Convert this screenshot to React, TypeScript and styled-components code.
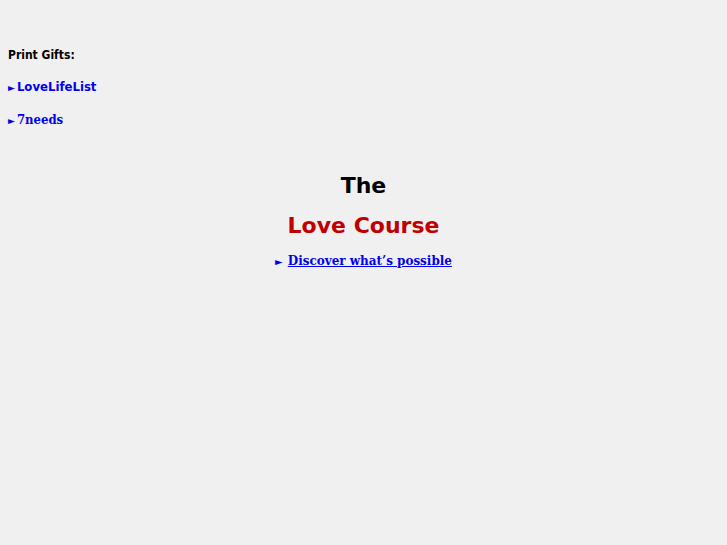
import { createGlobalStyle, styled } from "styled-components"

const Global = createGlobalStyle`
    html, body {
        margin: 0;
        background: #f0f0f0;
    }
    body {
        font-family: "DejaVu Sans", sans-serif;
    }
`

const sans = '"DejaVu Sans Condensed", "DejaVu Sans", sans-serif'
const serif = '"DejaVu Serif Condensed", "DejaVu Serif", serif'

const Page = styled.div`
    padding: 47px 8px 0;
`

const Side = styled.div`
    display: flex;
    flex-direction: column;
    gap: 16px;
`

const Label = styled.div`
    font-family: ${sans};
    font-stretch: condensed;
    font-weight: bold;
    font-size: 12px;
    line-height: 16px;
    color: #000;
`

const Arrow = styled.span<{ $gap?: number }>`
    font-family: "DejaVu Sans", sans-serif;
    font-size: 10px;
    font-weight: normal;
    color: #0000ee;
    margin-right: ${p => p.$gap ?? 2}px;
`

const Item = styled.a<{ $serif?: boolean }>`
    display: block;
    color: #0000ee;
    font-weight: bold;
    text-decoration: none;
    line-height: 16px;
    font-stretch: condensed;
    font-family: ${p => p.$serif ? serif : sans};
    font-size: 13px;
`

const Promo = styled.div`
    display: flex;
    flex-direction: column;
    align-items: center;
    margin-top: 37px;
`

const Heading = styled.div<{ $red?: boolean }>`
    font-weight: bold;
    font-size: 22px;
    line-height: 40px;
    color: ${p => p.$red ? "#c00000" : "#000"};
`

const DiscoverRow = styled.div`
    margin-top: 6px;
    line-height: 16px;
`

const Discover = styled.a`
    font-family: ${serif};
    font-stretch: condensed;
    font-weight: bold;
    font-size: 13.3px;
    color: #0000ee;
    text-decoration: underline;
`

export default () => <>
    <Global />
    <Page>
        <Side>
            <Label>Print Gifts:</Label>
            <Item href="#"><Arrow>►</Arrow>LoveLifeList</Item>
            <Item href="#" $serif><Arrow>►</Arrow>7needs</Item>
        </Side>
        <Promo>
            <Heading>The</Heading>
            <Heading $red>Love Course</Heading>
            <DiscoverRow>
                <Arrow $gap={5}>►</Arrow><Discover href="#">Discover what’s possible</Discover>
            </DiscoverRow>
        </Promo>
    </Page>
</>
